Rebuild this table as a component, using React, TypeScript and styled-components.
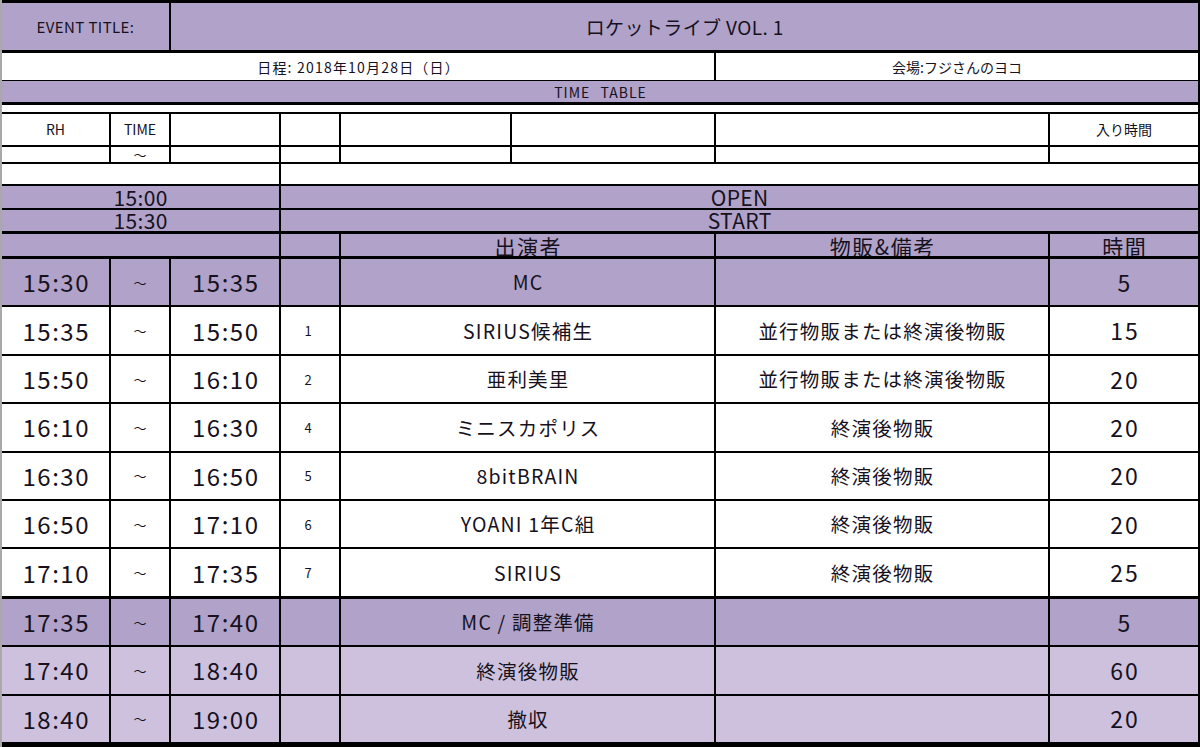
import React from "react";
import styled, { createGlobalStyle } from "styled-components";

const GlobalStyle = createGlobalStyle`
  html, body {
    margin: 0;
    padding: 0;
    background: #ffffff;
  }
  body {
    font-family: "Noto Sans CJK JP", "Noto Sans", sans-serif;
    color: #16111d;
  }
`;

// column widths between the grid rules (2px each)
const COLS = "107px 58px 108px 58px 169px 202px 332px 148px";

const tones = {
  white: "#ffffff",
  purple: "#b0a2c8",
  lilac: "#cdc1dd",
};

type Tone = keyof typeof tones;

interface IRow {
  start: string;
  end: string;
  no?: string;
  name: string;
  note?: string;
  min: string;
  tone: Tone;
  rule?: number;
}

const rows: IRow[] = [
  { start: "15:30", end: "15:35", name: "MC", min: "5", tone: "purple", rule: 0 },
  { start: "15:35", end: "15:50", no: "1", name: "SIRIUS候補生", note: "並行物販または終演後物販", min: "15", tone: "white" },
  { start: "15:50", end: "16:10", no: "2", name: "亜利美里", note: "並行物販または終演後物販", min: "20", tone: "white" },
  { start: "16:10", end: "16:30", no: "4", name: "ミニスカポリス", note: "終演後物販", min: "20", tone: "white" },
  { start: "16:30", end: "16:50", no: "5", name: "8bitBRAIN", note: "終演後物販", min: "20", tone: "white" },
  { start: "16:50", end: "17:10", no: "6", name: "YOANI 1年C組", note: "終演後物販", min: "20", tone: "white" },
  { start: "17:10", end: "17:35", no: "7", name: "SIRIUS", note: "終演後物販", min: "25", tone: "white" },
  { start: "17:35", end: "17:40", name: "MC / 調整準備", min: "5", tone: "purple", rule: 3 },
  { start: "17:40", end: "18:40", name: "終演後物販", min: "60", tone: "lilac" },
  { start: "18:40", end: "19:00", name: "撤収", min: "20", tone: "lilac" },
];

const Sheet = styled.div`
  width: 1200px;
  height: 747px;
  box-sizing: border-box;
  background: #000;
  border-left: 2px solid #a9a9a9;
  padding: 3px 2px 5px 0;
  display: flex;
  flex-direction: column;
  overflow: hidden;
`;

const Band = styled.div<{ $h?: number; $rule?: number }>`
  display: grid;
  grid-template-columns: ${COLS};
  column-gap: 2px;
  height: ${(p) => (p.$h ? `${p.$h}px` : "auto")};
  flex: ${(p) => (p.$h ? "none" : "1 1 0")};
  margin-top: ${(p) => p.$rule ?? 0}px;
  min-height: 0;
`;

const Body = styled.div`
  flex: 1;
  display: flex;
  flex-direction: column;
  margin-top: 3px;
`;

const Cell = styled.div<{ $span?: number; $tone?: Tone }>`
  grid-column: span ${(p) => p.$span ?? 1};
  background: ${(p) => tones[p.$tone ?? "white"]};
  display: flex;
  align-items: center;
  justify-content: center;
  overflow: hidden;
  white-space: nowrap;
  line-height: 1;
`;

const Label = styled.span`
  font-size: 14px;
  margin-top: -2px;
`;

const Info = styled.span<{ $spacing?: number }>`
  font-size: 14px;
  letter-spacing: ${(p) => p.$spacing ?? 0}px;
  padding-left: ${(p) => p.$spacing ?? 0}px;
`;

const Banner = styled.span`
  font-size: 14px;
  letter-spacing: 1px;
  word-spacing: 6px;
  padding-left: 1px;
`;

const EventLabel = styled.span`
  font-size: 15px;
  letter-spacing: 0.4px;
`;

const Title = styled.span`
  font-size: 19px;
  letter-spacing: 0.4px;
  padding-left: 0.4px;
`;

const Wave = styled.span`
  font-size: 13px;
  line-height: 1;
`;

const Number = styled.span`
  font-size: 13px;
  margin-left: -4px;
`;

const Marker = styled.span`
  font-size: 21px;
  letter-spacing: 0.4px;
  padding-left: 0.4px;
`;

const Heading = styled.span`
  font-size: 21px;
  letter-spacing: 1.5px;
  padding-left: 1.5px;
  margin-top: 2px;
`;

const Clock = styled.span`
  font-size: 24px;
  letter-spacing: 1.5px;
  padding-left: 1.5px;
`;

const Act = styled.span`
  font-size: 19.5px;
  letter-spacing: 1.2px;
  padding-left: 1.2px;
`;

const Minutes = styled.span`
  font-size: 23px;
  letter-spacing: 2px;
  padding-left: 2px;
`;

const App: React.FC = () => {
  return (
    <>
      <GlobalStyle />
      <Sheet>
        <Band $h={47}>
          <Cell $span={2} $tone="purple">
            <EventLabel>EVENT TITLE:</EventLabel>
          </Cell>
          <Cell $span={6} $tone="purple">
            <Title>ロケットライブ VOL. 1</Title>
          </Cell>
        </Band>

        <Band $h={27} $rule={3}>
          <Cell $span={6}>
            <Info $spacing={1.2}>日程: 2018年10月28日（日）</Info>
          </Cell>
          <Cell $span={2}>
            <Info>会場:フジさんのヨコ</Info>
          </Cell>
        </Band>

        <Band $h={21} $rule={1}>
          <Cell $span={8} $tone="purple">
            <Banner>TIME TABLE</Banner>
          </Cell>
        </Band>

        <Band $h={7} $rule={3}>
          <Cell $span={8} />
        </Band>

        <Band $h={31} $rule={2}>
          <Cell><Label>RH</Label></Cell>
          <Cell><Label>TIME</Label></Cell>
          <Cell />
          <Cell />
          <Cell />
          <Cell />
          <Cell />
          <Cell><Label>入り時間</Label></Cell>
        </Band>

        <Band $h={15} $rule={2}>
          <Cell />
          <Cell><Wave>～</Wave></Cell>
          <Cell />
          <Cell />
          <Cell />
          <Cell />
          <Cell />
          <Cell />
        </Band>

        <Band $h={20} $rule={2}>
          <Cell $span={3} />
          <Cell $span={5} />
        </Band>

        <Band $h={22} $rule={2}>
          <Cell $span={3} $tone="purple"><Marker>15:00</Marker></Cell>
          <Cell $span={5} $tone="purple"><Marker>OPEN</Marker></Cell>
        </Band>

        <Band $h={21} $rule={2}>
          <Cell $span={3} $tone="purple"><Marker>15:30</Marker></Cell>
          <Cell $span={5} $tone="purple"><Marker>START</Marker></Cell>
        </Band>

        <Band $h={22} $rule={3}>
          <Cell $span={3} $tone="purple" />
          <Cell $tone="purple" />
          <Cell $span={2} $tone="purple"><Heading>出演者</Heading></Cell>
          <Cell $tone="purple"><Heading>物販&amp;備考</Heading></Cell>
          <Cell $tone="purple"><Heading>時間</Heading></Cell>
        </Band>

        <Body>
          {rows.map((r, i) => (
            <Band key={i} $rule={r.rule ?? 2}>
              <Cell $tone={r.tone}><Clock>{r.start}</Clock></Cell>
              <Cell $tone={r.tone}><Wave>～</Wave></Cell>
              <Cell $tone={r.tone}><Clock>{r.end}</Clock></Cell>
              <Cell $tone={r.tone}><Number>{r.no}</Number></Cell>
              <Cell $span={2} $tone={r.tone}><Act>{r.name}</Act></Cell>
              <Cell $tone={r.tone}><Act>{r.note}</Act></Cell>
              <Cell $tone={r.tone}><Minutes>{r.min}</Minutes></Cell>
            </Band>
          ))}
        </Body>
      </Sheet>
    </>
  );
};

export default App;
